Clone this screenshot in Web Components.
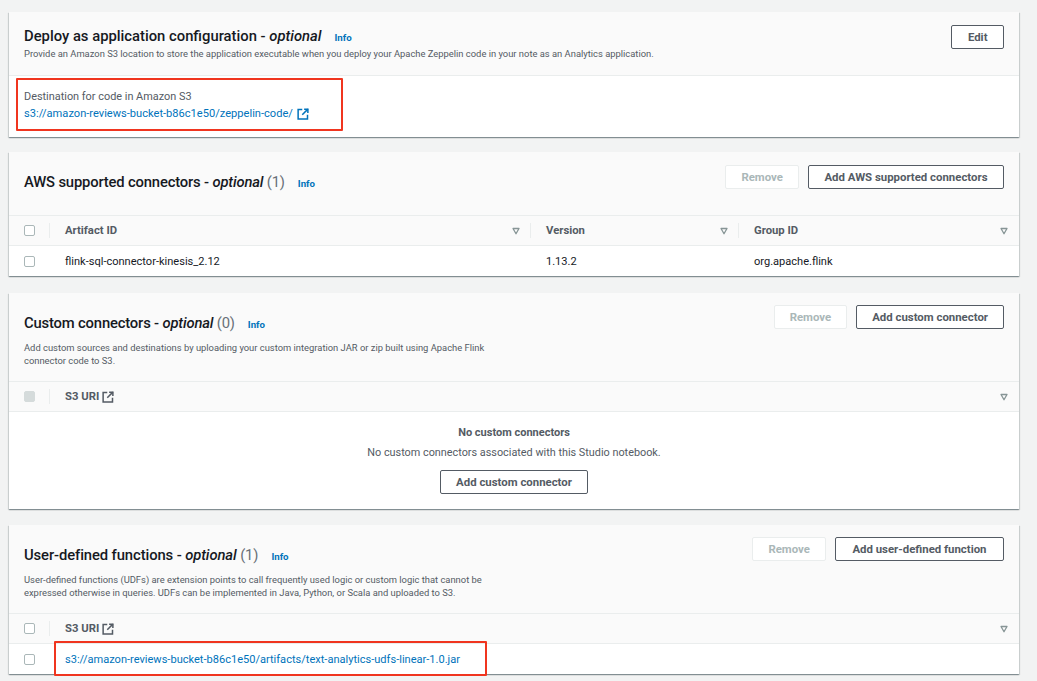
<!DOCTYPE html>
<html>
<head>
<meta charset="utf-8">
<title>Studio notebook configuration</title>
<style>
  html, body { margin: 0; height: 681px; overflow: hidden; }
  body {
    background: #f2f3f3;
    color: #16191f;
    font-family: Roboto, "Open Sans", sans-serif;
  }
  main { display: flex; flex-direction: column; width: 1010px; padding: 12px 0 0 9px; }
  a { color: #0073bb; text-decoration: none; }
  em { font-style: normal; font-weight: 400; color: #687078; }
</style>
</head>
<body>
<main>
  <aws-card style="--gap-after:15px;--title-top:1px;--desc-top:-1px;--desc-w:760px;--head-h:64px">
    <span slot="title">Deploy as application configuration - <i>optional</i></span>
    <span slot="desc">Provide an Amazon S3 location to store the application executable when you deploy your Apache Zeppelin code in your note as an Analytics application.</span>
    <aws-button slot="actions" style="--btn-pad:15.5px">Edit</aws-button>
    <aws-kv label="Destination for code in Amazon S3" href="#">s3://amazon-reviews-bucket-b86c1e50/zeppelin-code/</aws-kv>
  </aws-card>

  <aws-card style="--gap-after:17px;--head-h:64px;--title-ls:-.17px">
    <span slot="title">AWS supported connectors - <i>optional</i> <em>(1)</em></span>
    <aws-button slot="actions" disabled>Remove</aws-button>
    <aws-button slot="actions" style="--btn-pad:15.5px">Add AWS supported connectors</aws-button>
    <aws-table-head style="--cols:41px 481px 208px 1fr" labels="Artifact ID|Version|Group ID"></aws-table-head>
    <aws-table-row style="--cols:41px 481px 208px 1fr">
      <span>flink-sql-connector-kinesis_2.12</span><span>1.13.2</span><span>org.apache.flink</span>
    </aws-table-row>
  </aws-card>

  <aws-card style="--gap-after:16px;--head-h:89px;--head-top:12px;--title-top:8px;--desc-top:6px;--title-ls:-.17px">
    <span slot="title">Custom connectors - <i>optional</i> <em>(0)</em></span>
    <span slot="desc">Add custom sources and destinations by uploading your custom integration JAR or zip built using Apache Flink connector code to S3.</span>
    <aws-button slot="actions" disabled>Remove</aws-button>
    <aws-button slot="actions">Add custom connector</aws-button>
    <aws-table-head style="--cols:41px 1fr" labels="S3 URI" external disabled></aws-table-head>
    <aws-empty heading="No custom connectors" text="No custom connectors associated with this Studio notebook.">
      <aws-button>Add custom connector</aws-button>
    </aws-empty>
  </aws-card>

  <aws-card style="--gap-after:0;--head-h:89px;--head-top:12px;--title-top:8px;--desc-top:6px;--title-ls:-.1px">
    <span slot="title">User-defined functions - <i>optional</i> <em>(1)</em></span>
    <span slot="desc">User-defined functions (UDFs) are extension points to call frequently used logic or custom logic that cannot be expressed otherwise in queries. UDFs can be implemented in Java, Python, or Scala and uploaded to S3.</span>
    <aws-button slot="actions" disabled>Remove</aws-button>
    <aws-button slot="actions" style="--btn-pad:16.5px">Add user-defined function</aws-button>
    <aws-table-head style="--cols:41px 1fr" labels="S3 URI" external></aws-table-head>
    <aws-table-row style="--cols:41px 1fr">
      <a href="#">s3://amazon-reviews-bucket-b86c1e50/artifacts/text-analytics-udfs-linear-1.0.jar</a>
    </aws-table-row>
  </aws-card>
</main>
<red-mark style="left:16px;top:78px;width:327px;height:53px"></red-mark>
<red-mark style="left:54px;top:641px;width:433px;height:35px"></red-mark>

<script>
const EXTERNAL_ICON = `<svg viewBox="0 0 16 16" width="12" height="12" fill="none" stroke="currentColor" stroke-width="2" aria-hidden="true">
  <path d="M7 2H1.5v12.5H14V9"/><path d="M9.5 1.5h5v5"/><path d="M14.5 1.5 7 9"/></svg>`;
const SORT_ICON = `<svg viewBox="0 0 8 8" width="8" height="8" aria-hidden="true">
  <path d="M1 1.5h6L4 6.8z" fill="#fafafa" stroke="#879596" stroke-width="1.3" stroke-linejoin="round"/></svg>`;

class AwsCard extends HTMLElement {
  constructor() {
    super();
    this.attachShadow({ mode: 'open' });
    this.shadowRoot.innerHTML = `
      <style>
        :host {
          display: block;
          background: #fff;
          margin-bottom: var(--gap-after, 16px);
          box-shadow: 0 1px 1px 0 rgba(0, 28, 36, .3), 1px 1px 1px 0 rgba(0, 28, 36, .12), -1px 1px 1px 0 rgba(0, 28, 36, .12);
        }
        header {
          box-sizing: border-box;
          height: var(--head-h);
          display: flex;
          justify-content: space-between;
          align-items: flex-start;
          padding: var(--head-top, 13px) 15px 0;
          background: #fafafa;
          border-bottom: 1px solid #eaeded;
        }
        .text { padding-top: var(--title-top, 7px); flex: none; }
        h2 {
          display: flex;
          align-items: baseline;
          gap: 13px;
          margin: 0;
          font-size: 14.8px;
          line-height: 20px;
          font-weight: 500;
          color: #16191f;
          white-space: nowrap;
        }
        ::slotted([slot=title]) { letter-spacing: var(--title-ls, 0); }
        .info { font-size: 9.7px; font-weight: 700; color: #0073bb; }
        .desc {
          width: var(--desc-w, 465px);
          margin-top: var(--desc-top, 7px);
          font-size: 9.4px;
          line-height: 13px;
          color: #545b64;
        }
        .actions { display: flex; gap: 9px; flex: none; }
      </style>
      <header>
        <div class="text">
          <h2><slot name="title"></slot><span class="info">Info</span></h2>
          <div class="desc"><slot name="desc"></slot></div>
        </div>
        <div class="actions"><slot name="actions"></slot></div>
      </header>
      <slot></slot>`;
  }
}

class AwsButton extends HTMLElement {
  constructor() {
    super();
    this.attachShadow({ mode: 'open' });
    this.shadowRoot.innerHTML = `
      <style>
        :host {
          display: inline-flex;
          box-sizing: border-box;
          height: 24px;
          align-items: center;
          padding: 0 var(--btn-pad, 15px);
          background: #fff;
          border: 1px solid #545b64;
          border-radius: 2px;
          color: #545b64;
          font-size: 11.4px;
          font-weight: 700;
          white-space: nowrap;
        }
        :host([disabled]) {
          border-color: #eaeded;
          color: #aab7b8;
        }
      </style>
      <slot></slot>`;
  }
}

class AwsCheckbox extends HTMLElement {
  constructor() {
    super();
    this.attachShadow({ mode: 'open' });
    this.shadowRoot.innerHTML = `
      <style>
        :host {
          display: block;
          box-sizing: border-box;
          width: 11px;
          height: 11px;
          background: #fff;
          border: 1px solid #aab7b8;
          border-radius: 2px;
        }
        :host([disabled]) { background: #d5dbdb; border-color: #d5dbdb; }
      </style>`;
  }
}

class AwsTableHead extends HTMLElement {
  constructor() {
    super();
    this.attachShadow({ mode: 'open' });
  }

  connectedCallback() {
    const labels = this.getAttribute('labels').split('|');
    const external = this.hasAttribute('external') ? EXTERNAL_ICON : '';
    const disabled = this.hasAttribute('disabled') ? 'disabled' : '';
    this.shadowRoot.innerHTML = `
      <style>
        :host {
          display: grid;
          grid-template-columns: var(--cols);
          box-sizing: border-box;
          height: 30px;
          background: #fafafa;
          border-bottom: 1px solid #eaeded;
          color: #545b64;
          font-size: 11.3px;
          font-weight: 700;
        }
        .box { display: flex; align-items: center; padding-left: 15px; position: relative; }
        .th { display: flex; align-items: center; justify-content: space-between; padding: 0 11px 0 15px; position: relative; }
        .box::after, .th:not(:last-child)::after {
          content: '';
          position: absolute;
          right: 0;
          top: 7px;
          bottom: 7px;
          width: 1px;
          background: #eaeded;
        }
        .label { display: flex; align-items: center; gap: 3px; }
        svg { display: block; }
      </style>
      <div class="box"><aws-checkbox ${disabled}></aws-checkbox></div>
      ${labels.map(l => `<div class="th"><span class="label">${l}${external}</span>${SORT_ICON}</div>`).join('')}`;
  }
}

class AwsTableRow extends HTMLElement {
  constructor() {
    super();
    this.attachShadow({ mode: 'open' });
    this.shadowRoot.innerHTML = `
      <style>
        :host {
          display: grid;
          grid-template-columns: var(--cols);
          height: 30px;
          align-items: center;
          font-size: 11.05px;
          color: #16191f;
        }
        .box { padding-left: 15px; }
        ::slotted(*) { padding-left: 15px; }
      </style>
      <div class="box"><aws-checkbox></aws-checkbox></div>
      <slot></slot>`;
  }
}

class AwsKv extends HTMLElement {
  constructor() {
    super();
    this.attachShadow({ mode: 'open' });
  }

  connectedCallback() {
    this.shadowRoot.innerHTML = `
      <style>
        :host {
          display: block;
          box-sizing: border-box;
          height: 61px;
          padding: 12px 15px 0;
          font-size: 10.9px;
          line-height: 17px;
          color: #545b64;
        }
        a { display: flex; align-items: center; gap: 4px; font-size: 11.1px; color: #0073bb; text-decoration: none; }
      </style>
      <div>${this.getAttribute('label')}</div>
      <a href="${this.getAttribute('href')}"><slot></slot>${EXTERNAL_ICON}</a>`;
  }
}

class AwsEmpty extends HTMLElement {
  constructor() {
    super();
    this.attachShadow({ mode: 'open' });
  }

  connectedCallback() {
    this.shadowRoot.innerHTML = `
      <style>
        :host {
          display: flex;
          flex-direction: column;
          align-items: center;
          box-sizing: border-box;
          height: 97px;
          padding-top: 13px;
          font-size: 10.85px;
          line-height: 16px;
          color: #545b64;
        }
        b { font-weight: 700; font-size: 11px; }
        p { margin: 4px 0 9px; }
      </style>
      <b>${this.getAttribute('heading')}</b>
      <p>${this.getAttribute('text')}</p>
      <slot></slot>`;
  }
}

class RedMark extends HTMLElement {
  constructor() {
    super();
    this.attachShadow({ mode: 'open' });
    this.shadowRoot.innerHTML = `
      <style>
        :host {
          position: absolute;
          box-sizing: border-box;
          border: 2px solid #f0351f;
          border-radius: 1px;
        }
      </style>`;
  }
}

customElements.define('aws-checkbox', AwsCheckbox);
customElements.define('aws-button', AwsButton);
customElements.define('aws-table-head', AwsTableHead);
customElements.define('aws-table-row', AwsTableRow);
customElements.define('aws-kv', AwsKv);
customElements.define('aws-empty', AwsEmpty);
customElements.define('aws-card', AwsCard);
customElements.define('red-mark', RedMark);
</script>
</body>
</html>
